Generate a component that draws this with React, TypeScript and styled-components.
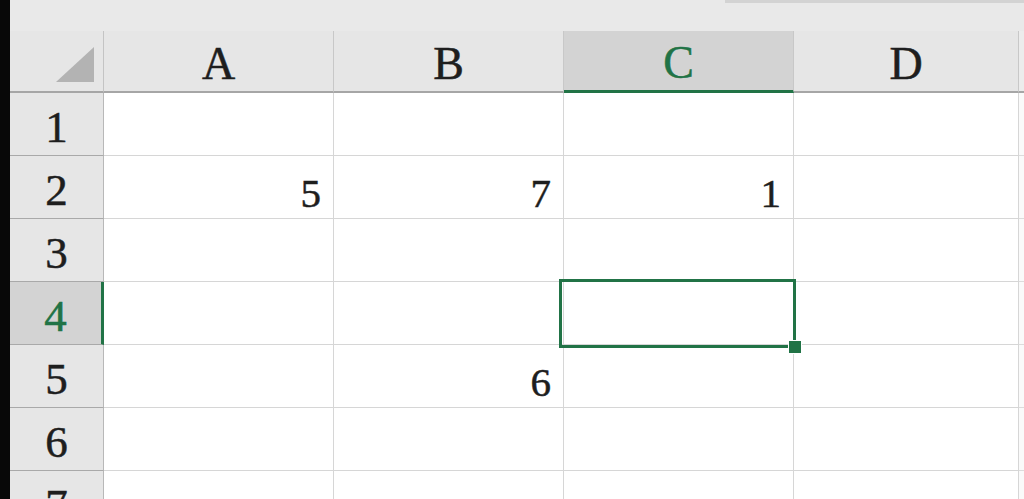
import React from "react";
import styled, { createGlobalStyle, css } from "styled-components";

const GlobalStyle = createGlobalStyle`
  html, body {
    margin: 0;
    padding: 0;
    overflow: hidden;
    background: #e8e8e8;
  }
`;

const GREEN = "#217346";

const Screen = styled.div`
  display: flex;
  width: 1024px;
  height: 499px;
  overflow: hidden;
  background: #e8e8e8;
  font-family: "Liberation Serif", "Times New Roman", serif;
  color: #1e1e1e;
  -webkit-text-stroke: 0.5px currentColor;
`;

const Bezel = styled.div`
  width: 10px;
  flex: none;
  background: #080808;
`;

const Workspace = styled.div`
  flex: 1;
  display: flex;
  flex-direction: column;
  min-width: 0;
`;

const TopBand = styled.div`
  height: 31px;
  flex: none;
  display: flex;
  justify-content: flex-end;
  align-items: flex-start;
  background: #e9e9e9;
`;

const ScrollStrip = styled.div`
  width: 299px;
  height: 3px;
  background: #d3d3d3;
`;

const Sheet = styled.div`
  display: grid;
  grid-template-columns: 94px 230px 230px 230px 225px 1fr;
  grid-template-rows: 62px;
  grid-auto-rows: 63px;
`;

const Corner = styled.div`
  box-sizing: border-box;
  background: #e6e6e6;
  border-right: 1px solid #c4c4c4;
  border-bottom: 2px solid #a6a6a6;
  display: flex;
  justify-content: flex-end;
  align-items: flex-end;
  padding: 0 9px 9px 0;
`;

const ColHeader = styled.div<{ $selected?: boolean }>`
  box-sizing: border-box;
  display: flex;
  align-items: center;
  justify-content: center;
  padding-top: 4px;
  font-size: 46px;
  background: #e6e6e6;
  border-right: 1px solid #c8c8c8;
  border-bottom: 2px solid #a6a6a6;
  ${(p) =>
    p.$selected &&
    css`
      background: #d3d3d3;
      color: ${GREEN};
      border-bottom: 3px solid ${GREEN};
    `}
`;

const Filler = styled.div<{ $head?: boolean }>`
  box-sizing: border-box;
  background: ${(p) => (p.$head ? "#ececec" : "#fafafa")};
  border-bottom: ${(p) => (p.$head ? "2px solid #a6a6a6" : "1px solid #dcdcdc")};
`;

const RowHeader = styled.div<{ $selected?: boolean }>`
  box-sizing: border-box;
  display: flex;
  align-items: center;
  justify-content: center;
  padding-top: 5px;
  font-size: 45px;
  background: #e6e6e6;
  border-right: 1px solid #b8b8b8;
  border-bottom: 1px solid #a9a9a9;
  ${(p) =>
    p.$selected &&
    css`
      background: #d3d3d3;
      color: ${GREEN};
      border-right: 3px solid ${GREEN};
    `}
`;

const Cell = styled.div`
  position: relative;
  box-sizing: border-box;
  display: flex;
  align-items: flex-end;
  justify-content: flex-end;
  padding: 0 12px 4px 0;
  background: #ffffff;
  border-right: 1px solid #d6d6d6;
  border-bottom: 1px solid #d6d6d6;
  font-size: 41px;
  line-height: 1;
`;

// active cell outline sits over the neighbouring gridlines
const Selection = styled.div`
  position: absolute;
  z-index: 2;
  top: -3px;
  left: -5px;
  right: -3px;
  bottom: -4px;
  border: 3px solid ${GREEN};
  pointer-events: none;
`;

const FillHandle = styled.div`
  position: absolute;
  right: -9px;
  bottom: -9px;
  width: 12px;
  height: 12px;
  background: ${GREEN};
  border: 1px solid #ffffff;
`;

const columns = ["A", "B", "C", "D"];
const values: Record<string, string> = {
  A2: "5",
  B2: "7",
  C2: "1",
  B5: "6",
};
const activeCol = "C";
const activeRow = 4;
const rows = [1, 2, 3, 4, 5, 6, 7];

function CornerMark() {
  return (
    <svg width="38" height="35" viewBox="0 0 38 35">
      <polygon points="38,0 38,35 0,35" fill="#b3b3b3" />
    </svg>
  );
}

export default function App() {
  return (
    <>
      <GlobalStyle />
      <Screen>
        <Bezel />
        <Workspace>
          <TopBand>
            <ScrollStrip />
          </TopBand>
          <Sheet>
            <Corner>
              <CornerMark />
            </Corner>
            {columns.map((c) => (
              <ColHeader key={c} $selected={c === activeCol}>
                {c}
              </ColHeader>
            ))}
            <Filler $head />
            {rows.map((r) => (
              <React.Fragment key={r}>
                <RowHeader $selected={r === activeRow}>{r}</RowHeader>
                {columns.map((c) => (
                  <Cell key={c + r}>
                    {values[c + r]}
                    {c === activeCol && r === activeRow && (
                      <Selection>
                        <FillHandle />
                      </Selection>
                    )}
                  </Cell>
                ))}
                <Filler />
              </React.Fragment>
            ))}
          </Sheet>
        </Workspace>
      </Screen>
    </>
  );
}
